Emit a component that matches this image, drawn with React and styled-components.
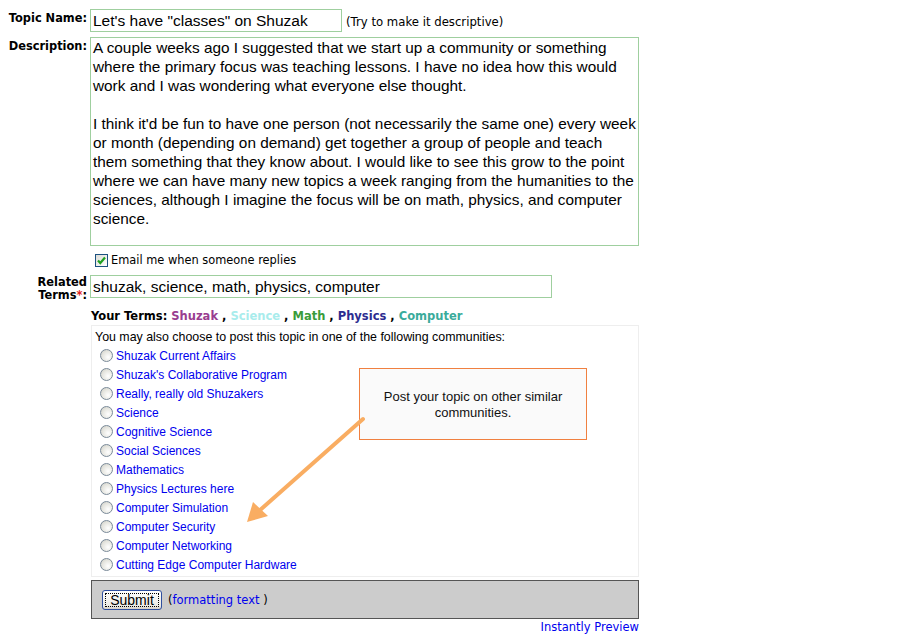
import React from 'react'
import styled, { createGlobalStyle } from 'styled-components'

const LABEL_WIDTH = 88
const LINK_BLUE = '#0000ee'
const INPUT_BORDER = '#9fcf9f'

const TERMS = [
  { label: 'Shuzak', color: '#993d90' },
  { label: 'Science', color: '#a8ecec' },
  { label: 'Math', color: '#3a9c3a' },
  { label: 'Physics', color: '#2c2c90' },
  { label: 'Computer', color: '#3aab9b' }
]

const COMMUNITIES = [
  'Shuzak Current Affairs',
  "Shuzak's Collaborative Program",
  'Really, really old Shuzakers',
  'Science',
  'Cognitive Science',
  'Social Sciences',
  'Mathematics',
  'Physics Lectures here',
  'Computer Simulation',
  'Computer Security',
  'Computer Networking',
  'Cutting Edge Computer Hardware'
]

const DESCRIPTION = `A couple weeks ago I suggested that we start up a community or something where the primary focus was teaching lessons. I have no idea how this would work and I was wondering what everyone else thought.

I think it'd be fun to have one person (not necessarily the same one) every week or month (depending on demand) get together a group of people and teach them something that they know about. I would like to see this grow to the point where we can have many new topics a week ranging from the humanities to the sciences, although I imagine the focus will be on math, physics, and computer science.`

const App = () => {
  return (
    <Page>
      <GlobalStyle />
      <Row top={9}>
        <Label>Topic Name:</Label>
        <TextInput width={252} defaultValue={'Let\'s have "classes" on Shuzak'} />
        <Hint>(Try to make it descriptive)</Hint>
      </Row>
      <Row top={5}>
        <Label pad={3}>Description:</Label>
        <TextArea defaultValue={DESCRIPTION} />
      </Row>
      <Row top={7}>
        <Label />
        <CheckRow>
          <CheckBox>
            <svg width='11' height='11' viewBox='0 0 11 11'>
              <path d='M2 5.5 L4.3 8 L9 2.5' fill='none' stroke='#21a121' strokeWidth='2.2' />
            </svg>
          </CheckBox>
          Email me when someone replies
        </CheckRow>
      </Row>
      <Row top={8}>
        <Label pad={1}>
          Related
          <br />
          Terms<Star>*</Star>:
        </Label>
        <TextInput width={462} defaultValue='shuzak, science, math, physics, computer' />
      </Row>
      <Row top={7}>
        <Label />
        <Terms>
          Your Terms:{' '}
          {TERMS.map((term, i) => (
            <React.Fragment key={term.label}>
              <Term color={term.color}>{term.label}</Term>
              {i < TERMS.length - 1 ? ' , ' : ''}
            </React.Fragment>
          ))}
        </Terms>
      </Row>
      <Row top={2}>
        <Label />
        <Communities>
          <Intro>You may also choose to post this topic in one of the following communities:</Intro>
          {COMMUNITIES.map(name => (
            <Community key={name}>
              <Radio />
              <CommunityLink>{name}</CommunityLink>
            </Community>
          ))}
        </Communities>
      </Row>
      <Row top={3}>
        <Label />
        <SubmitBar>
          <SubmitButton>Submit</SubmitButton>
          <Formatting>
            (<TextLink>formatting text</TextLink> )
          </Formatting>
        </SubmitBar>
      </Row>
      <Row top={1}>
        <Label />
        <PreviewLine>
          <TextLink>Instantly Preview</TextLink>
        </PreviewLine>
      </Row>

      <Callout>Post your topic on other similar communities.</Callout>
      <Arrow width='130' height='125' viewBox='0 0 130 125'>
        <line x1='123' y1='9' x2='19' y2='101' stroke='#f9ad62' strokeWidth='4' strokeLinecap='round' />
        <polygon points='7,112 13,92 28,106' fill='#f9ad62' />
      </Arrow>
    </Page>
  )
}

const GlobalStyle = createGlobalStyle`
  html, body {
    margin: 0;
    padding: 0;
    background: #ffffff;
  }
  * {
    box-sizing: border-box;
  }
`

const Page = styled.div`
  position: relative;
  width: 903px;
  height: 640px;
  overflow: hidden;
  font-family: 'DejaVu Sans', Verdana, sans-serif;
  font-size: 11.5px;
  color: #000;
`

const Row = styled.div`
  display: flex;
  align-items: flex-start;
  margin-top: ${({ top }) => top}px;
`

const Label = styled.div`
  flex: 0 0 ${LABEL_WIDTH}px;
  width: ${LABEL_WIDTH}px;
  padding-right: 1px;
  padding-top: ${({ pad = 3 }) => pad}px;
  text-align: right;
  font-weight: bold;
  font-size: 11.4px;
  line-height: 13px;
  margin-right: 2px;
`

const Star = styled.span`
  color: #e02020;
`

const TextInput = styled.input`
  width: ${({ width }) => width}px;
  height: 23px;
  border: 1px solid ${INPUT_BORDER};
  padding: 0 2px;
  font-family: 'Liberation Sans', Arial, sans-serif;
  font-size: 15.5px;
  color: #000;
  outline: none;
`

const Hint = styled.span`
  margin-left: 4px;
  padding-top: 6px;
  font-size: 11.7px;
`

const TextArea = styled.textarea`
  width: 549px;
  height: 209px;
  border: 1px solid ${INPUT_BORDER};
  padding: 0 0 0 2px;
  font-family: 'Liberation Sans', Arial, sans-serif;
  font-size: 15.35px;
  line-height: 19px;
  color: #000;
  resize: none;
  overflow: hidden;
  outline: none;
`

const CheckRow = styled.label`
  display: flex;
  align-items: center;
  gap: 3px;
  margin-left: 5px;
  font-size: 11.4px;
  line-height: 14px;
`

const CheckBox = styled.span`
  display: flex;
  align-items: center;
  justify-content: center;
  width: 13px;
  height: 13px;
  border: 1px solid #1c5180;
  background: linear-gradient(135deg, #dcdcd6, #ffffff);
`

const Terms = styled.div`
  margin-left: 1px;
  font-weight: bold;
  font-size: 11.5px;
  line-height: 14px;
`

const Term = styled.span`
  color: ${({ color }) => color};
`

const Communities = styled.div`
  width: 548px;
  height: 252px;
  margin-left: 1px;
  border: 1px solid #eeeeee;
  padding: 4px 0 0 3px;
  font-family: 'Liberation Sans', Arial, sans-serif;
  font-size: 12px;
`

const Intro = styled.div`
  font-size: 12.4px;
  line-height: 15px;
  margin-bottom: 2px;
`

const Community = styled.div`
  display: flex;
  align-items: center;
  height: 19px;
  padding-left: 5px;
  gap: 3px;
`

const Radio = styled.span`
  width: 13px;
  height: 13px;
  border-radius: 50%;
  border: 1px solid #7a8a99;
  background: radial-gradient(circle at 65% 65%, #ffffff 0%, #e6e6e0 55%, #c8c8c0 100%);
  margin-top: -3px;
`

const CommunityLink = styled.span`
  color: ${LINK_BLUE};
  line-height: 15px;
`

const SubmitBar = styled.div`
  display: flex;
  align-items: center;
  gap: 6px;
  width: 548px;
  height: 39px;
  margin-left: 1px;
  padding-left: 10px;
  border: 1px solid #555555;
  background: #cccccc;
`

const SubmitButton = styled.button`
  width: 60px;
  height: 20px;
  padding: 0;
  border: 1px solid #2f4f9f;
  border-radius: 3px;
  background: linear-gradient(#ffffff, #ecebe6 80%, #d6d0c5);
  font-family: 'Liberation Sans', Arial, sans-serif;
  font-size: 14px;
  line-height: 16px;
  color: #000;
  outline: 1px dotted #000;
  outline-offset: -4px;
`

const Formatting = styled.span`
  font-size: 11.5px;
`

const TextLink = styled.span`
  color: ${LINK_BLUE};
`

const PreviewLine = styled.div`
  width: 549px;
  text-align: right;
  font-size: 11.5px;
  line-height: 14px;
`

const Callout = styled.div`
  position: absolute;
  left: 359px;
  top: 368px;
  width: 228px;
  height: 72px;
  padding: 20px 10px 0;
  border: 1px solid #f08040;
  background: #fafafa;
  text-align: center;
  font-family: 'Liberation Sans', Arial, sans-serif;
  font-size: 13px;
  line-height: 16px;
  color: #111;
`

const Arrow = styled.svg`
  position: absolute;
  left: 240px;
  top: 410px;
`

export default App
